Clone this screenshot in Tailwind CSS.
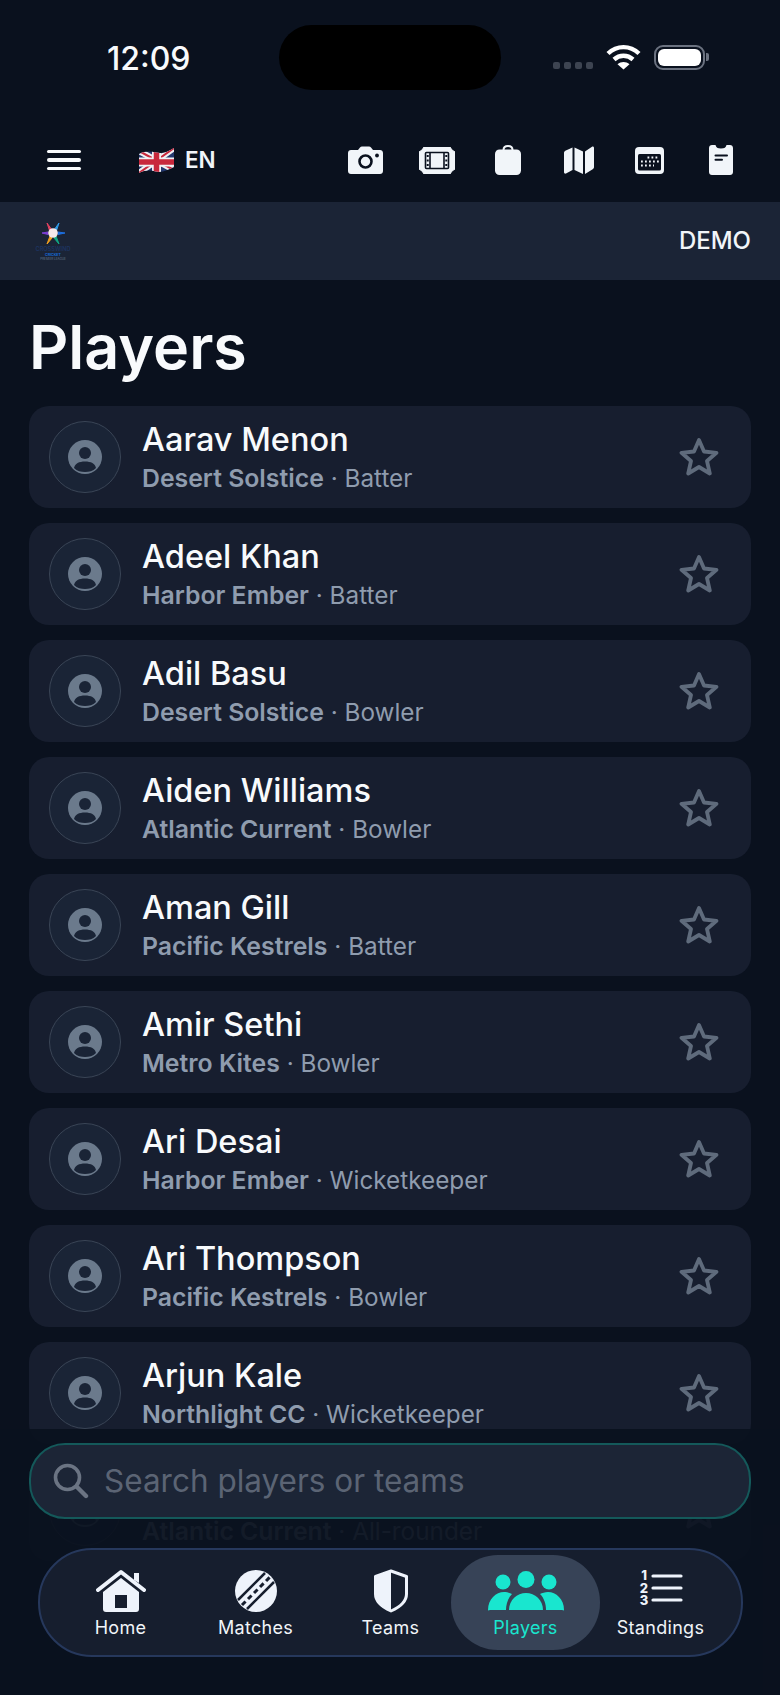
<!DOCTYPE html>
<html lang="en">
<head>
    <meta charset="UTF-8">
    <meta name="viewport" content="width=device-width, initial-scale=1.0">
    <script src="https://cdn.jsdelivr.net/npm/@tailwindcss/browser@4"></script>
    <title>Players</title>
</head>
<body class="bg-[#0a111e]">
<div class="relative w-[780px] h-[1695px] overflow-hidden bg-[#0a111e] font-['Inter',sans-serif] text-white">

    <!-- status bar -->
    <div class="relative h-[114px] flex items-start">
        <span class="ml-[107px] mt-[39px] text-[32px] leading-[40px] font-medium text-[#f8fafc]">12:09</span>
        <div class="absolute left-[279px] top-[25px] w-[222px] h-[65px] rounded-[33px] bg-black"></div>
        <div class="ml-auto mr-[71px] mt-[44px] flex items-center">
            <div class="flex gap-[4px] mt-[17px] mr-[13px]">
                <span class="w-[7px] h-[7px] rounded-[2px] bg-[#3d4451]"></span>
                <span class="w-[7px] h-[7px] rounded-[2px] bg-[#3d4451]"></span>
                <span class="w-[7px] h-[7px] rounded-[2px] bg-[#3d4451]"></span>
                <span class="w-[7px] h-[7px] rounded-[2px] bg-[#3d4451]"></span>
            </div>
            <svg width="35" height="26" viewBox="0 0 35 26" fill="none" stroke="#fff" stroke-width="4.4" class="mr-[13px]">
                <path d="M2 9.5C11 1 24 1 33 9.5"/>
                <path d="M8 15.5C13.5 10.5 21.5 10.5 27 15.5"/>
                <path d="M17.5 25.5L11.5 20.2C15 17.2 20 17.2 23.5 20.2Z" fill="#fff" stroke="none"/>
            </svg>
            <div class="w-[51px] h-[25px] rounded-[9px] border-2 border-[#6b7280] p-[2px]">
                <div class="w-full h-full rounded-[6px] bg-white"></div>
            </div>
            <div class="w-[3px] h-[8px] rounded-r-[2px] bg-[#6b7280] ml-[1px]"></div>
        </div>
    </div>

    <!-- top toolbar -->
    <div class="h-[88px] flex items-center pt-[4px] pr-[24px]">
        <div class="ml-[47px] w-[34px] flex flex-col gap-[5px]">
            <span class="h-[3.5px] rounded-full bg-[#f8fafc]"></span>
            <span class="h-[3.5px] rounded-full bg-[#f8fafc]"></span>
            <span class="h-[3.5px] rounded-full bg-[#f8fafc]"></span>
        </div>
        <svg width="35" height="25" viewBox="0 0 35 25" class="ml-[58px]">
            <defs><clipPath id="flag"><path d="M0 6C6 3 11 3 17 4.500C23 6 29 4 35 0V19C29 22 23 25 17 23.500C11 22 6 22 0 25Z"/></clipPath></defs>
            <g clip-path="url(#flag)">
                <rect width="35" height="25" fill="#24386e"/>
                <path d="M0 3L35 22M35 0L0 25" stroke="#f1f1f4" stroke-width="6"/>
                <path d="M0 3L35 22M35 0L0 25" stroke="#c8283c" stroke-width="2"/>
                <path d="M17.500 0V25M0 14H35" stroke="#f1f1f4" stroke-width="9"/>
                <path d="M17.500 0V25M0 14H35" stroke="#c8283c" stroke-width="5.500"/>
            </g>
        </svg>
        <span class="ml-[11px] text-[22.500px] leading-[28px] font-semibold text-[#f1f5f9]">EN</span>
        <div class="ml-auto flex items-center">
            <div class="w-[71px] flex justify-center">
                <svg width="35" height="28" viewBox="0 0 35 28">
                    <path d="M3 4H10L12 1.5C12.5 .8 13.2 .5 14 .5H21C21.8 .5 22.5 .8 23 1.5L25 4H32C33.7 4 35 5.3 35 7V25C35 26.7 33.7 28 32 28H3C1.3 28 0 26.7 0 25V7C0 5.3 1.3 4 3 4Z" fill="#f1f5f9"/>
                    <circle cx="17.5" cy="15.5" r="6" fill="none" stroke="#0a111e" stroke-width="2.6"/>
                    <circle cx="29" cy="9.5" r="1.9" fill="#0a111e"/>
                </svg>
            </div>
            <div class="w-[71px] flex justify-center">
                <svg width="36" height="27" viewBox="0 0 36 27">
                    <path d="M5 0H31L33 3L36 5V22L33 24L31 27H5L3 24L0 22V5L3 3Z" fill="#f1f5f9" stroke="#f1f5f9" stroke-linejoin="round"/>
                    <rect x="6.5" y="5.5" width="23" height="16" rx="1" fill="none" stroke="#0a111e" stroke-width="1.6"/>
                    <path d="M11 6V21M25 6V21" stroke="#0a111e" stroke-width="1.6"/>
                    <path d="M8.7 8V19.5M27.3 8V19.5" stroke="#0a111e" stroke-width="2" stroke-dasharray="2 2.5"/>
                </svg>
            </div>
            <div class="w-[71px] flex justify-center">
                <svg width="26" height="30" viewBox="0 0 26 30">
                    <path d="M8.5 5C8.5 2 10.5 1 13 1C15.5 1 17.5 2 17.5 5" fill="none" stroke="#f1f5f9" stroke-width="2"/>
                    <rect y="4.5" width="26" height="25.5" rx="4.5" fill="#f1f5f9"/>
                </svg>
            </div>
            <div class="w-[71px] flex justify-center">
                <svg width="30" height="28" viewBox="0 0 30 28" fill="#f1f5f9">
                    <path d="M8.5 1.5V24L2 27.5C1 28 0 27.3 0 26.2V7C0 6 .5 5.3 1.3 4.8Z"/>
                    <path d="M10.5 1.5L19 5.5V28L10.5 24Z"/>
                    <path d="M21 5.5L28 .8C29 .2 30 .8 30 2V21C30 22 29.5 22.8 28.7 23.2L21 28Z"/>
                </svg>
            </div>
            <div class="w-[71px] flex justify-center">
                <svg width="29" height="27" viewBox="0 0 29 27">
                    <rect width="29" height="27" rx="4" fill="#f1f5f9"/>
                    <rect x="3" y="7" width="23" height="16.5" rx="1.5" fill="#0a111e"/>
                    <path d="M12.500 10.500H24M6 14.500H24M6 18.500H19" stroke="#f1f5f9" stroke-width="1.800" stroke-dasharray="1.800 2.200"/>
                </svg>
            </div>
            <div class="w-[71px] flex justify-center">
                <svg width="24" height="30" viewBox="0 0 24 30">
                    <path d="M3 0H6.5C7 2.5 8.5 3.5 12 3.5C15.5 3.5 17 2.5 17.5 0H21C22.7 0 24 1.3 24 3V27C24 28.7 22.7 30 21 30H3C1.3 30 0 28.7 0 27V3C0 1.3 1.3 0 3 0Z" fill="#f1f5f9"/>
                    <path d="M6.5 10.5H18M6.5 14.7H13" stroke="#0a111e" stroke-width="2" stroke-linecap="round"/>
                </svg>
            </div>
        </div>
    </div>

    <!-- club banner -->
    <div class="h-[78px] bg-[#1b2436] flex items-center justify-between pl-[33px] pr-[29px]">
        <svg width="40" height="42" viewBox="0 0 40 42">
            <path d="M19 10L14 3L17 12Z" fill="#e0405f" stroke="#e0405f"/>
            <path d="M21 10L26 3L23 12Z" fill="#2f9be8" stroke="#2f9be8"/>
            <path d="M15 12L9 13L15 14.500Z" fill="#7c3fd6" stroke="#7c3fd6"/>
            <path d="M25 12L32 13L25 14.500Z" fill="#1d6fe0" stroke="#1d6fe0"/>
            <path d="M17 16L14 24L19 18Z" fill="#f0a020" stroke="#f0a020"/>
            <path d="M23 16L26 24L21 18Z" fill="#10a884" stroke="#10a884"/>
            <circle cx="20" cy="13" r="4.800" fill="#f6e8ea"/>
            <text x="20" y="31" text-anchor="middle" font-size="5.600" font-family="Inter, sans-serif" font-weight="600" fill="#1d3462">CROSSWIND</text>
            <text x="20" y="36" text-anchor="middle" font-size="3.600" font-family="Inter, sans-serif" font-weight="700" fill="#1668d8">CRICKET</text>
            <text x="20" y="40" text-anchor="middle" font-size="3" font-family="Inter, sans-serif" fill="#64748b">PREMIER LEAGUE</text>
        </svg>
        <span class="text-[24px] leading-[30px] font-medium text-[#f1f5f9]">DEMO</span>
    </div>

    <h1 class="ml-[29px] mt-[33px] mb-[25px] text-[61px] leading-[68px] font-semibold text-[#f8fafc]">Players</h1>

    <!-- player list -->
    <div id="playersContainer" class="mx-[29px] flex flex-col gap-[15px]"></div>

    <!-- fade above the bottom controls -->
    <div class="absolute left-0 right-0 top-[1429px] bottom-0 bg-[#0a111e]/[0.93]"></div>

    <!-- search -->
    <div class="absolute left-[29px] right-[29px] top-[1443px] h-[76px] rounded-[36px] border-2 border-[#14595a] bg-[#1c2536] flex items-center pl-[22px]">
        <svg width="36" height="36" viewBox="0 0 36 36" fill="none" stroke="#6b7483" stroke-width="3.6" stroke-linecap="round">
            <circle cx="14.5" cy="14.5" r="12"/>
            <path d="M23.5 23.5L33 33" stroke-width="4.4"/>
        </svg>
        <input type="text" placeholder="Search players or teams" class="ml-[15px] w-[560px] bg-transparent text-[31.500px] leading-[40px] outline-none placeholder:text-[#5b6474]">
    </div>

    <!-- bottom nav -->
    <nav class="absolute left-[38px] top-[1548px] w-[705px] h-[109px] rounded-[54px] border-2 border-[#26385c] bg-[#161e2e] px-[13px] grid grid-cols-5 items-center">
        <a class="flex flex-col items-center h-[95px] pt-[14px] text-[#f1f5f9]">
            <svg width="50" height="44" viewBox="0 0 50 44" class="h-[44px]">
                <path d="M38 4H43V14L38 11Z" fill="#eef3fb"/>
                <path d="M2 21L25 3L48 21" fill="none" stroke="#eef3fb" stroke-width="4" stroke-linecap="round" stroke-linejoin="round"/>
                <path d="M25 9L43 23V40C43 42 42 43 40 43H10C8 43 7 42 7 40V23Z" fill="#eef3fb"/>
                <rect x="19" y="26" width="12" height="13" fill="#161e2e"/>
            </svg>
            <span class="mt-[3px] text-[18px] leading-[24px] tracking-[.3px]">Home</span>
        </a>
        <a class="flex flex-col items-center h-[95px] pt-[14px] text-[#f1f5f9]">
            <svg width="44" height="44" viewBox="0 0 44 44">
                <circle cx="22" cy="22" r="21" fill="#eef3fb"/>
                <path d="M4 31L31 4M13 40L40 13" stroke="#161e2e" stroke-width="2.500"/>
                <path d="M8 36L36 8" stroke="#161e2e" stroke-width="3" stroke-dasharray="5 3.500"/>
            </svg>
            <span class="mt-[3px] text-[18px] leading-[24px] tracking-[.3px]">Matches</span>
        </a>
        <a class="flex flex-col items-center h-[95px] pt-[14px] text-[#f1f5f9]">
            <svg width="36" height="44" viewBox="0 0 36 44">
                <path d="M18 2L33.5 7.5V25C33.5 33 27 38 18 42C9 38 2.5 33 2.5 25V7.5Z" fill="#161e2e" stroke="#eef3fb" stroke-width="3" stroke-linejoin="round"/>
                <path d="M18 2V42C9 38 2.5 33 2.5 25V7.5Z" fill="#eef3fb"/>
            </svg>
            <span class="mt-[3px] text-[18px] leading-[24px] tracking-[.3px]">Teams</span>
        </a>
        <a class="relative flex flex-col items-center h-[95px] pt-[14px] -mx-[7px] rounded-[47px] bg-[#374357] text-[#19e6cf]">
            <svg width="78" height="44" viewBox="0 0 78 44" fill="#19e6cf">
                <circle cx="16" cy="13" r="7.5"/>
                <circle cx="39" cy="10.5" r="8.5"/>
                <circle cx="62" cy="13" r="7.5"/>
                <path d="M1 41C1 30 9 23 17 23C20 23 23 24 25 25C21 29 19 35 19 41H3C2 41 1 42 1 41Z"/>
                <path d="M22 41C22 31 30 24 39 24C48 24 56 31 56 41Z"/>
                <path d="M77 41C77 30 69 23 61 23C58 23 55 24 53 25C57 29 59 35 59 41H75C76 41 77 42 77 41Z"/>
            </svg>
            <span class="mt-[3px] text-[18px] leading-[24px] tracking-[.3px]">Players</span>
        </a>
        <a class="flex flex-col items-center h-[95px] pt-[14px] text-[#f1f5f9]">
            <svg width="44" height="44" viewBox="0 0 44 44">
                <g font-family="Inter, sans-serif" font-size="13" font-weight="800" fill="#eef3fb" text-anchor="middle">
                    <text x="5" y="11">1</text>
                    <text x="5" y="24">2</text>
                    <text x="5" y="36">3</text>
                </g>
                <path d="M14 7H42M14 19H42M14 31H42" stroke="#eef3fb" stroke-width="3.2" stroke-linecap="round"/>
            </svg>
            <span class="mt-[3px] text-[18px] leading-[24px] tracking-[.3px]">Standings</span>
        </a>
    </nav>
</div>

<script>
    // the last card sits behind the search box, so only its second line shows
    const players = [
        ["Aarav Menon", "Desert Solstice", "Batter"],
        ["Adeel Khan", "Harbor Ember", "Batter"],
        ["Adil Basu", "Desert Solstice", "Bowler"],
        ["Aiden Williams", "Atlantic Current", "Bowler"],
        ["Aman Gill", "Pacific Kestrels", "Batter"],
        ["Amir Sethi", "Metro Kites", "Bowler"],
        ["Ari Desai", "Harbor Ember", "Wicketkeeper"],
        ["Ari Thompson", "Pacific Kestrels", "Bowler"],
        ["Arjun Kale", "Northlight CC", "Wicketkeeper"],
        ["", "Atlantic Current", "All-rounder"]
    ];

    let playersContainer = document.getElementById("playersContainer");
    for (let player of players) {
        playersContainer.innerHTML += `
            <div class="h-[102px] shrink-0 rounded-[20px] bg-[#171e2f] flex items-center pl-[20px] pr-[32px]">
                <div class="w-[72px] h-[72px] rounded-full border border-[#3a4556] bg-[#1a2436] flex items-center justify-center">
                    <svg width="34" height="34" viewBox="0 0 34 34">
                        <circle cx="17" cy="17" r="17" fill="#6b7a8c"/>
                        <circle cx="17" cy="13" r="6" fill="#1a2436"/>
                        <path d="M6 28C7 23.5 11 21.5 17 21.5C23 21.5 27 23.5 28 28C25 31 21 32 17 32C13 32 9 31 6 28Z" fill="#1a2436"/>
                    </svg>
                </div>
                <div class="ml-[21px] flex-1">
                    <div class="h-[39px] text-[32.500px] leading-[39px] font-medium text-[#f8fafc]">${player[0]}</div>
                    <div class="mt-[2px] text-[24.300px] leading-[34px] text-[#8f9cae]"><span class="text-[24.800px] font-semibold">${player[1]}</span> · ${player[2]}</div>
                </div>
                <svg width="40" height="40" viewBox="0 0 40 40" fill="none" stroke="#5f6b7c" stroke-width="3.8" stroke-linejoin="round">
                    <path d="M20 3L25 14.5L37.5 15.8L28 24L30.8 36.5L20 30L9.2 36.5L12 24L2.5 15.8L15 14.5Z"/>
                </svg>
            </div>
        `;
    }
</script>
</body>
</html>
